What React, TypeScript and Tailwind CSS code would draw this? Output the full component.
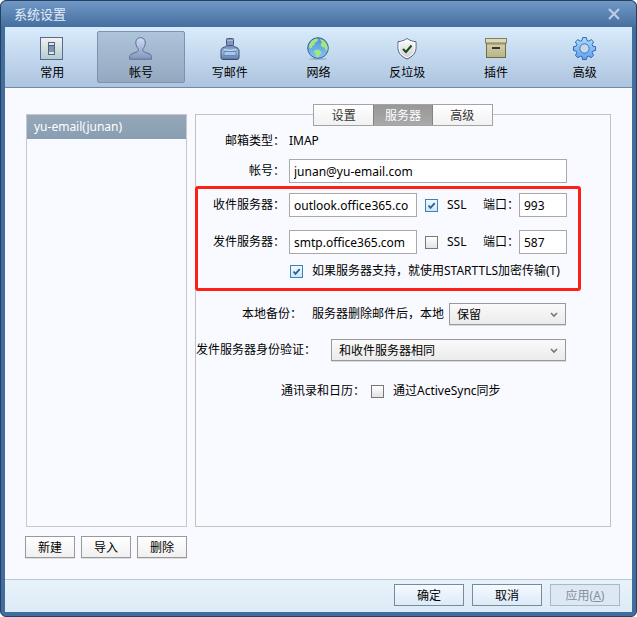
import { useState } from 'react';
import type { InputHTMLAttributes, ReactNode } from 'react';
import clsx from 'clsx';

function GeneralIcon() {
  return (
    <svg width="24" height="24" viewBox="0 0 24 24">
      <defs>
        <linearGradient id="general" x1="0" y1="0" x2="0" y2="1">
          <stop offset="0" stopColor="#f4f2f1" />
          <stop offset="1" stopColor="#b4cbcd" />
        </linearGradient>
      </defs>
      <rect x="0.5" y="0.5" width="22" height="22" fill="url(#general)" stroke="#536a92" />
      <rect x="8.5" y="5.5" width="6" height="12" fill="#dfe6e9" stroke="#506388" />
      <rect x="9" y="9" width="5" height="6" fill="#8094a5" />
      <path d="M9 8.500h5" stroke="#465d86" />
    </svg>
  );
}

function AccountIcon() {
  return (
    <svg width="24" height="24" viewBox="0 0 24 24">
      <defs>
        <linearGradient id="account" x1="0" y1="0" x2="0" y2="1">
          <stop offset="0" stopColor="#cfdcf4" />
          <stop offset="1" stopColor="#8296bd" />
        </linearGradient>
      </defs>
      <path
        d="M11.500 .7C8.300 .7 6.600 3 6.800 6c.1 2.300 1 4.100 2.200 5.500.6.800.6 2.500-.5 3.100-1.700.9-5.200 1.700-6.900 3-1 .8-1 2.700-1 4.600h22c0-1.900 0-3.800-1-4.600-1.800-1.300-5.300-2.100-7-3-1.100-.6-1-2.300-.4-3.100C15.300 10.100 16.200 8.300 16.300 6c.1-3-1.600-5.300-4.800-5.300z"
        fill="url(#account)"
        stroke="#5c6f97"
      />
    </svg>
  );
}

function ComposeIcon() {
  return (
    <svg width="24" height="24" viewBox="0 0 24 24">
      <defs>
        <linearGradient id="ink" x1="0" y1="0" x2="0" y2="1">
          <stop offset="0" stopColor="#7187b4" />
          <stop offset="0.5" stopColor="#9bbce0" />
          <stop offset="1" stopColor="#5675a5" />
        </linearGradient>
      </defs>
      <path d="M4.500 22.500c-1-.3-1.500-1-1.500-2V14c0-2.200 1.300-3.200 3.500-4 1.200-.5 2.500-.7 2.500-2h6c0 1.300 1.300 1.500 2.500 2 2.200.8 3.500 1.800 3.500 4v6.500c0 1-.5 1.700-1.500 2z" fill="url(#ink)" stroke="#3f4c69" />
      <rect x="8.500" y="1.500" width="7" height="7" rx="1" fill="#8195c5" stroke="#485675" />
      <path d="M9 3.500h6" stroke="#adbce2" />
      <path d="M6 14.500h12v4H6z" fill="#a7c8e8" stroke="#6687b6" />
      <path d="M6 12.500q6 2 12 0" fill="none" stroke="#cfe4f7" />
    </svg>
  );
}

function NetworkIcon() {
  return (
    <svg width="24" height="24" viewBox="0 0 24 24">
      <defs>
        <linearGradient id="globe" x1="0" y1="0" x2="0" y2="1">
          <stop offset="0" stopColor="#4f93d6" />
          <stop offset="1" stopColor="#82c6f7" />
        </linearGradient>
      </defs>
      <ellipse cx="12" cy="22" rx="9" ry="1" fill="#9bb3cf" />
      <circle cx="12" cy="11" r="10.300" fill="url(#globe)" stroke="#3b6399" />
      <path d="M3.500 7 6 3.500l4-2 2 .8-.5 2L9 5.500l-.5 2.500-2 .7-.5 2-1.500.8L3 10z" fill="#a5e67e" />
      <path d="m14 2 3 1 3.500 3.500 1.300 4-.6 3.500-1.700-1-1-2.500-2.500-.5-1.500-2.500 1.500-2-1-1.500z" fill="#a5e67e" />
      <path d="m8.500 13.500 2.500-1 3 1 1.500 2-1.500 2-1.500 2.500-2 .5-.5-3-2-2z" fill="#a5e67e" />
    </svg>
  );
}

function SpamIcon() {
  return (
    <svg width="24" height="24" viewBox="0 0 24 24">
      <defs>
        <linearGradient id="shield" x1="0" y1="0" x2="0" y2="1">
          <stop offset="0" stopColor="#ffffff" />
          <stop offset="1" stopColor="#cbcdd0" />
        </linearGradient>
      </defs>
      <path d="M12 1.500C10 3.200 6.500 4.500 3 4.700v6.300c0 5 3.500 8.800 9 11 5.500-2.200 9-6 9-11V4.700C17.500 4.500 14 3.200 12 1.500z" fill="url(#shield)" stroke="#51627e" />
      <path d="M12 2.900C10 4.300 7.300 5.400 4.200 5.700V11c0 4.300 2.900 7.600 7.800 9.700 4.900-2.100 7.800-5.400 7.800-9.700V5.700C16.700 5.400 14 4.300 12 2.900z" fill="none" stroke="#fff" />
      <path d="m8 12 3 3 5.500-6.500" fill="none" stroke="#1b4b1b" strokeWidth="2" />
    </svg>
  );
}

function PluginIcon() {
  return (
    <svg width="24" height="24" viewBox="0 0 24 24">
      <defs>
        <linearGradient id="plugin" x1="0" y1="0" x2="0" y2="1">
          <stop offset="0" stopColor="#d7d1ae" />
          <stop offset="1" stopColor="#b9b389" />
        </linearGradient>
      </defs>
      <rect x="2.500" y="5.500" width="19" height="15" fill="url(#plugin)" stroke="#6f6e42" />
      <path d="M3 7h18" stroke="#8f8b61" />
      <rect x="1.500" y="1.500" width="21" height="4.500" fill="#ddd8ba" stroke="#85825a" />
      <path d="M8 11h8" stroke="#3c3828" strokeWidth="2" />
    </svg>
  );
}

function AdvancedIcon() {
  return (
    <svg width="24" height="24" viewBox="0 0 24 24">
      <defs>
        <linearGradient id="gear" x1="0" y1="0" x2="0" y2="1">
          <stop offset="0" stopColor="#b0dcfb" />
          <stop offset="1" stopColor="#5c9fee" />
        </linearGradient>
      </defs>
      <path
        d="M9.600 .6h3.800l.6 2.900 1.700.7L18.200 2.600l2.400 2.300-1.500 2.600.7 1.700 2.800.5v3.800l-2.800.6-.7 1.700 1.500 2.500-2.400 2.400-2.500-1.500-1.700.7-.6 2.700H9.600L9 19.900l-1.700-.7-2.500 1.500-2.400-2.400 1.500-2.500-.7-1.700-2.700-.6V9.700l2.700-.5.700-1.700-1.500-2.600 2.400-2.300 2.500 1.600L9 3.500z"
        fill="url(#gear)"
        stroke="#2f68b4"
        strokeLinejoin="round"
      />
      <circle cx="11.500" cy="11.500" r="4.700" fill="#c5d8ee" stroke="#3c72ba" />
    </svg>
  );
}

const sections: { name: string; icon: ReactNode }[] = [
  { name: '常用', icon: <GeneralIcon /> },
  { name: '帐号', icon: <AccountIcon /> },
  { name: '写邮件', icon: <ComposeIcon /> },
  { name: '网络', icon: <NetworkIcon /> },
  { name: '反垃圾', icon: <SpamIcon /> },
  { name: '插件', icon: <PluginIcon /> },
  { name: '高级', icon: <AdvancedIcon /> },
];

const tabs = ['设置', '服务器', '高级'];

const labelClass = 'w-[89px] shrink-0 text-right whitespace-nowrap';
const inputClass = 'h-6 min-w-0 border border-[#a9a9a9] bg-white px-1 outline-none';
const footerButtonClass = 'h-[22px] w-[70px] border pt-0.5';

function CheckBox(props: InputHTMLAttributes<HTMLInputElement>) {
  return (
    <span className="grid size-[13px] shrink-0">
      <input
        type="checkbox"
        {...props}
        className="peer col-start-1 row-start-1 size-[13px] appearance-none border border-[#777] bg-linear-to-b from-white to-[#e3e3e3] checked:border-[#3c82ba] checked:from-[#f2f9fe] checked:to-[#cfe5f6]"
      />
      <svg viewBox="0 0 13 13" className="pointer-events-none invisible col-start-1 row-start-1 size-[13px] peer-checked:visible">
        <path d="m3.500 6.500 2 2.300 4.200-4.600" fill="none" stroke="#2a628f" strokeWidth="1.800" />
      </svg>
    </span>
  );
}

function DropDown({ id, width, options }: { id: string; width: string; options: string[] }) {
  return (
    <span className={clsx('relative flex', width)}>
      <select id={id} className="h-[22px] w-full appearance-none border border-[#999] bg-linear-to-b from-[#fafafa] to-[#ebebeb] pt-0.5 pl-[7px] shadow-[0_1px_0_#d9dadd] outline-none">
        {options.map((option) => (
          <option key={option}>{option}</option>
        ))}
      </select>
      <svg width="8" height="6" viewBox="0 0 8 6" className="pointer-events-none absolute top-[9px] right-2">
        <path d="m1 1 3 3 3-3" fill="none" stroke="#777" strokeWidth="1.600" />
      </svg>
    </span>
  );
}

export default function App() {
  const [section, setSection] = useState('帐号');
  const [tab, setTab] = useState('服务器');

  return (
    <div className="flex min-h-screen flex-col bg-white font-['Noto_Sans','Noto_Sans_CJK_SC',sans-serif] text-xs leading-4 text-black">
      <div className="flex flex-1 flex-col rounded-md border border-[#28405f] bg-[#426e9f]">
        <header className="flex h-[26px] items-center justify-between rounded-t-md bg-linear-to-b from-[#7199c7] to-[#456f9f] pr-4 pl-[13px]">
          <h1 className="text-[13px] text-[#e3edf7]">系统设置</h1>
          <button type="button" aria-label="关闭">
            <svg width="12" height="12" viewBox="0 0 12 12">
              <path d="m1 1 10 10M11 1 1 11" stroke="#b8cee6" strokeWidth="2.200" />
            </svg>
          </button>
        </header>

        <div className="mx-1 mb-1 flex flex-1 flex-col bg-[#f9faff]">
          <nav className="grid grid-cols-7 border-b border-[#718ba5] bg-linear-to-b from-[#d9ecfc] to-[#adc4df] px-[3px] pt-1 pb-1">
            {sections.map(({ name, icon }) => (
              <button
                key={name}
                type="button"
                onClick={() => setSection(name)}
                className={clsx(
                  'flex h-[52px] flex-col items-center gap-1 rounded-xs border pt-[5px]',
                  section === name ? 'border-[#7c92ae] bg-linear-to-b from-[#aec4da] to-[#95a8c0]' : 'border-transparent',
                )}
              >
                {icon}
                <span>{name}</span>
              </button>
            ))}
          </nav>

          <main className="flex flex-1 gap-2 pt-[26px] pr-[21px] pb-[21px] pl-5">
            <aside className="flex w-[162px] shrink-0 flex-col gap-[9px]">
              <ul className="ml-px flex-1 border border-[#c8c8cb]">
                <li className="flex h-6 items-center bg-linear-to-b from-[#94a8b9] to-[#899eb2] pl-[7px] text-white">yu-email(junan)</li>
              </ul>
              <div className="grid grid-cols-3 gap-[6px]">
                {['新建', '导入', '删除'].map((name) => (
                  <button key={name} type="button" className="h-[22px] border border-[#999] bg-linear-to-b from-white to-[#f0f0f0] pt-0.5 shadow-[0_1px_0_#dedfe2]">
                    {name}
                  </button>
                ))}
              </div>
            </aside>

            <section className="mb-[31px] min-w-0 flex-1 border border-[#c2c2c4]">
              <div role="tablist" className="mx-auto -mt-[11px] grid w-[180px] grid-cols-3 border border-[#a3a3a3] bg-linear-to-b from-white to-[#f1f1f1]">
                {tabs.map((name) => (
                  <button
                    key={name}
                    type="button"
                    role="tab"
                    aria-selected={tab === name}
                    onClick={() => setTab(name)}
                    className={clsx('h-5 pt-0.5', tab === name ? 'border-x border-[#838383] bg-linear-to-b from-[#989898] to-[#a9a9a9] text-white' : 'text-[#333]')}
                  >
                    {name}
                  </button>
                ))}
              </div>

              <div className="mt-[7px] flex items-center gap-1">
                <span className={labelClass}>邮箱类型：</span>
                <span>IMAP</span>
              </div>
              <div className="mt-[10px] mr-[43px] flex items-center gap-1">
                <label htmlFor="account" className={labelClass}>帐号：</label>
                <input id="account" defaultValue="junan@yu-email.com" className={clsx(inputClass, 'flex-1')} />
              </div>

              <div className="mt-[3px] mr-[29px] -ml-px rounded-[3px] pt-[7px] pr-[14px] pb-3 pl-px outline-3 -outline-offset-3 outline-[#fc2016]">
                <div className="flex items-center gap-1">
                  <label htmlFor="incoming" className={labelClass}>收件服务器：</label>
                  <input id="incoming" defaultValue="outlook.office365.co" className={clsx(inputClass, 'w-32')} />
                  <label className="ml-1 flex items-center gap-[9px]"><CheckBox defaultChecked />SSL</label>
                  <label htmlFor="incoming-port" className="ml-auto">端口：</label>
                  <input id="incoming-port" defaultValue="993" className={clsx(inputClass, '-ml-1 w-12')} />
                </div>
                <div className="mt-[13px] flex items-center gap-1">
                  <label htmlFor="outgoing" className={labelClass}>发件服务器：</label>
                  <input id="outgoing" defaultValue="smtp.office365.com" className={clsx(inputClass, 'w-32')} />
                  <label className="ml-1 flex items-center gap-[9px]"><CheckBox />SSL</label>
                  <label htmlFor="outgoing-port" className="ml-auto">端口：</label>
                  <input id="outgoing-port" defaultValue="587" className={clsx(inputClass, '-ml-1 w-12')} />
                </div>
                <label className="mt-[9px] ml-[94px] flex items-center gap-[9px] whitespace-nowrap">
                  <CheckBox defaultChecked />
                  如果服务器支持，就使用STARTTLS加密传输(T)
                </label>
              </div>

              <div className="mt-3 mr-11 flex items-center justify-end">
                <span className="mr-[10px]">本地备份：</span>
                <label htmlFor="backup" className="mr-[5px]">服务器删除邮件后，本地</label>
                <DropDown id="backup" width="w-[117px]" options={['保留', '删除']} />
              </div>
              <div className="mt-[14px] mr-11 flex items-center justify-between">
                <label htmlFor="auth">发件服务器身份验证：</label>
                <DropDown id="auth" width="w-[235px]" options={['和收件服务器相同', '使用不同的帐号']} />
              </div>
              <div className="mt-[22px] ml-[85px] flex items-center">
                <span className="mr-[6px]">通讯录和日历：</span>
                <label className="flex items-center gap-[9px]"><CheckBox />通过ActiveSync同步</label>
              </div>
            </section>
          </main>

          <footer className="flex justify-end gap-2 border-t border-[#b9c8d4] bg-linear-to-b from-[#e8f2fa] to-[#ddebf6] pt-1 pr-3 pb-[6px]">
            <button type="button" className={clsx(footerButtonClass, 'border-[#788b9e] bg-linear-to-b from-[#f5faff] to-[#dceaf8]')}>确定</button>
            <button type="button" className={clsx(footerButtonClass, 'border-[#788b9e] bg-linear-to-b from-[#f5faff] to-[#dceaf8]')}>取消</button>
            <button type="button" disabled className={clsx(footerButtonClass, 'border-[#aab8c6] bg-[#dde8f4] text-[#87909a]')}>应用(<u>A</u>)</button>
          </footer>
        </div>
      </div>
    </div>
  );
}
